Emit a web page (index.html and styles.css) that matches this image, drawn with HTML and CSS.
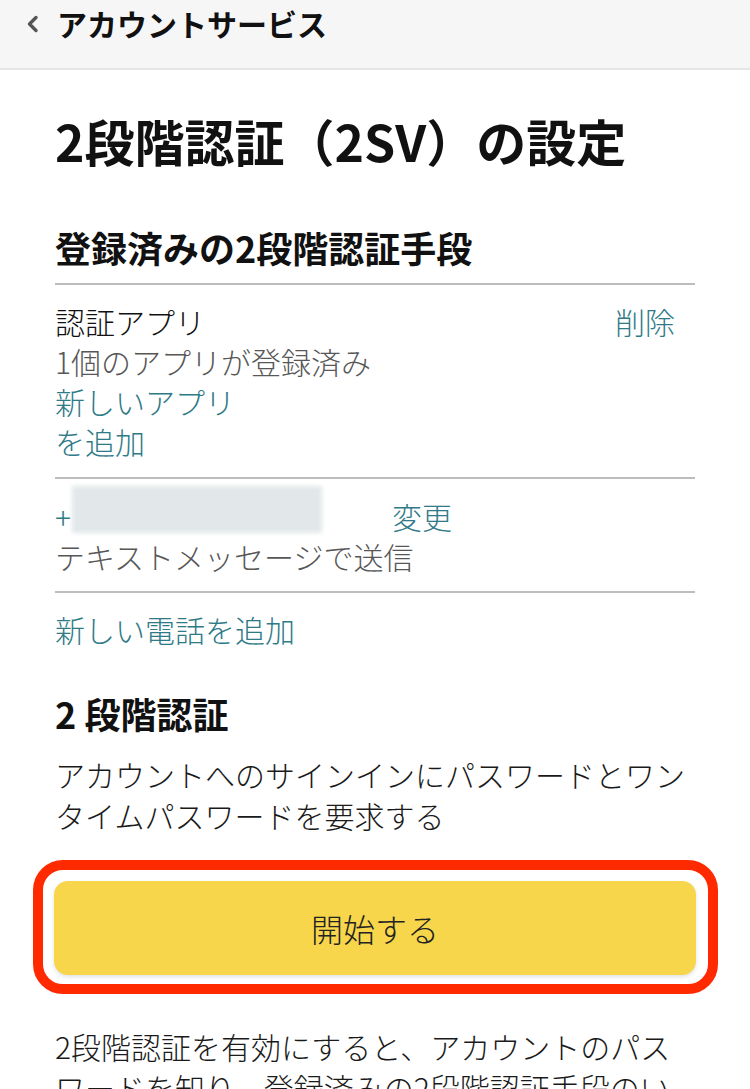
FILE: index.html
```html
<!DOCTYPE html>
<html lang="ja">
<head>
  <meta charset="UTF-8">
  <meta name="viewport" content="width=device-width, initial-scale=1.0">
  <title>2段階認証（2SV）の設定</title>
  <link rel="stylesheet" href="styles.css">
</head>
<body>

<header class="topbar">
  <svg class="back" width="14" height="18" viewBox="0 0 14 18">
    <polyline points="10,2.5 3.5,9 10,15.5" fill="none" stroke="#555" stroke-width="3.4" stroke-linecap="round" stroke-linejoin="round"/>
  </svg>
  <span class="topbar-title">アカウントサービス</span>
</header>

<main class="page">
  <h1 class="page-title">2段階認証（2SV）の設定</h1>

  <h2 class="section-title ruled">登録済みの2段階認証手段</h2>

  <div class="method ruled">
    <div class="method-info">
      <div class="method-name">認証アプリ</div>
      <div class="muted">1個のアプリが登録済み</div>
      <a class="link narrow" href="#">新しいアプリを追加</a>
    </div>
    <a class="link" href="#">削除</a>
  </div>

  <div class="method phone ruled">
    <div class="method-info">
      <div class="phone-line">
        <span class="link">+</span><span class="redacted"></span><a class="link" href="#">変更</a>
      </div>
      <div class="muted">テキストメッセージで送信</div>
    </div>
  </div>

  <div class="method last">
    <a class="link" href="#">新しい電話を追加</a>
  </div>

  <h2 class="section-title second">2 段階認証</h2>
  <p class="text">アカウントへのサインインにパスワードとワンタイムパスワードを要求する</p>

  <div class="highlight">
    <button class="start-btn">開始する</button>
  </div>

  <p class="text note">2段階認証を有効にすると、アカウントのパスワードを知り、登録済みの2段階認証手段のいずれかにアクセスできる人だけがサインインできるようになります。</p>
</main>

</body>
</html>
```

FILE: styles.css
```css
body {
  margin: 0;
  padding: 0;
  font-family: "Noto Sans CJK JP", "Noto Sans", sans-serif;
  font-weight: 300;
  color: #111;
  background: #fff;
}

a {
  text-decoration: none;
}

.topbar {
  height: 70px;
  box-sizing: border-box;
  background: #f6f6f6;
  border-bottom: 2px solid #e6e6e6;
  display: flex;
  align-items: flex-start;
  padding: 4px 0 0 26px;
}

.back {
  margin-top: 11px;
  margin-right: 17px;
}

.topbar-title {
  font-size: 30px;
  line-height: 38px;
  font-weight: 700;
  color: #111;
}

.page {
  padding: 40px 55px 0;
}

.page-title {
  margin: 0;
  font-size: 50px;
  line-height: 60px;
  font-weight: 700;
}

.section-title {
  margin: 55px 0 0;
  font-size: 36px;
  line-height: 44px;
  font-weight: 700;
}

.section-title.ruled {
  padding-bottom: 14px;
}

.section-title.second {
  margin-top: 42px;
}

.ruled {
  border-bottom: 2px solid #bdbdbd;
}

.method {
  display: flex;
  justify-content: space-between;
  align-items: flex-start;
  padding: 16px 20px 16px 0;
  font-size: 30px;
  line-height: 40px;
}

.method.phone {
  padding: 17px 0 15px;
}

.method.last {
  padding: 16px 0 0;
}

.method-name {
  color: #111;
}

.muted {
  color: #575757;
}

.link {
  color: #2f7a87;
}

.narrow {
  display: block;
  max-width: 200px;
}

.redacted {
  display: inline-block;
  width: 250px;
  height: 47px;
  margin: -10px 70px 0 1px;
  vertical-align: -4px;
  background: #e2e8ea;
  filter: blur(2px);
}

.text {
  margin: 0;
  font-size: 30px;
  line-height: 41px;
  color: #1a1a1a;
}

.section-title + .text {
  margin-top: 19px;
}

.highlight {
  margin: 24px -23px 0 -22px;
  padding: 11px 12px 9px 11px;
  border: 10px solid #ff2a00;
  border-radius: 30px;
}

.start-btn {
  display: block;
  width: 100%;
  height: 94px;
  border: none;
  border-radius: 14px;
  background: #f7d64b;
  box-shadow: 0 2px 4px rgba(0, 0, 0, 0.12);
  font-family: inherit;
  font-weight: 300;
  font-size: 32px;
  color: #222;
  cursor: pointer;
}

.note {
  margin-top: 32px;
}
```
